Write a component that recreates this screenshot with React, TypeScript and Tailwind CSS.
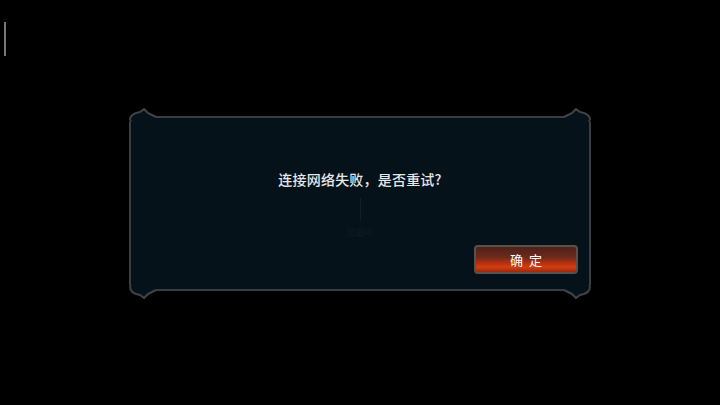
import React from 'react';

// Hooked ornament on the dialog's corners; flip it for the other three
const CornerHook: React.FC<{ className: string }> = ({ className }) => (
  <svg className={className} width="28" height="12" viewBox="0 0 28 12" fill="none">
    <path d="M1 12 C1 7 5 5 11 4 L15 1 L19 5 L27 9 L27 12 Z" fill="#06121a" />
    <path d="M1 12 C1 7 5 5 11 4 L15 1 L19 5 L27 9" stroke="#404346" strokeWidth="2" strokeLinejoin="round" />
  </svg>
);

const App: React.FC = () => {
  return (
    <div
      className="w-[720px] h-[405px] bg-black overflow-hidden flex flex-col"
      style={{ fontFamily: '"Noto Sans CJK SC", "Noto Sans", sans-serif' }}
    >
      <div className="ml-[4px] mt-[22px] w-[2px] h-[34px] bg-[#777]" />

      <div className="relative ml-[129px] mt-[60px] w-[462px] h-[175px] rounded-[7px] border-2 border-[#3b3e41] bg-[#06121a] flex flex-col">
        <CornerHook className="absolute -top-[10px] -left-[2px]" />
        <CornerHook className="absolute -top-[10px] -right-[2px] -scale-x-100" />
        <CornerHook className="absolute -bottom-[10px] -left-[2px] -scale-y-100" />
        <CornerHook className="absolute -bottom-[10px] -right-[2px] rotate-180" />

        <div className="flex flex-col items-center pt-[52px]">
          <p className="text-[14px] leading-[18px] text-[#e6e7e8] font-medium tracking-[0.2px]">连接网络失败，是否重试?</p>
          <div className="mt-[10px] w-px h-[22px] bg-[#121f27]" />
          <p className="mt-[8px] text-[9px] leading-[10px] text-[#0f1b22]">加载中</p>
        </div>

        <div className="mt-auto mb-[15px] mr-[11px] flex justify-end">
          <button className="w-[104px] h-[29px] rounded-[4px] border-2 border-[#57504d] bg-[linear-gradient(to_bottom,#4e2118_0%,#6e2a1c_42%,#a92e12_60%,#d43e10_80%,#9c280d_100%)] text-white text-[13px] leading-[25px] tracking-[6px] pl-[6px]">
            确定
          </button>
        </div>
      </div>
    </div>
  );
};

export default App;
